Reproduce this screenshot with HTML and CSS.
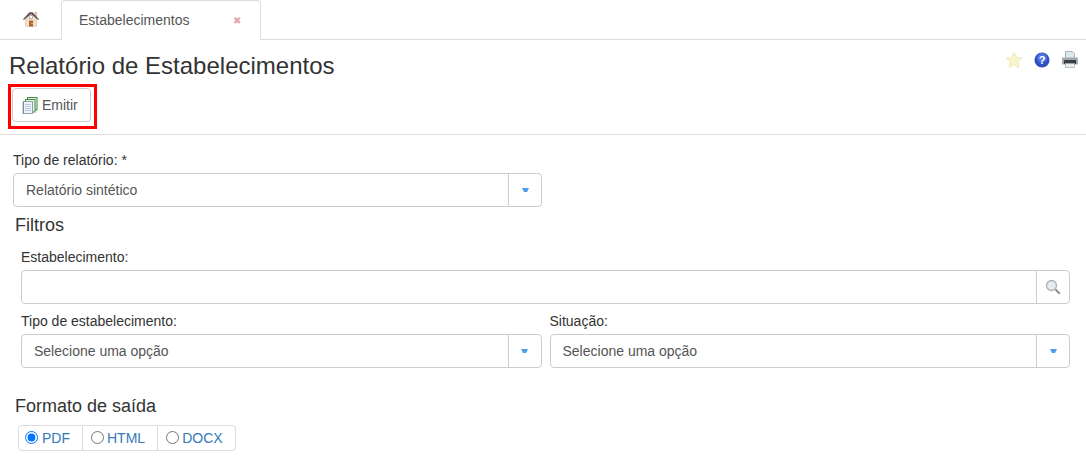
FILE: index.html
```html
<!DOCTYPE html>
<html lang="pt-BR">

<head>
    <meta charset="UTF-8">
    <title>Relatório de Estabelecimentos</title>
    <link rel="stylesheet" href="styles.css">
</head>

<body>
    <div class="tabs">
        <a class="tab-home" href="#" aria-label="Início">
            <svg width="18" height="18" viewBox="0 0 18 18">
                <rect x="12.500" y="2" width="2.500" height="5" fill="#d9c3ac"/>
                <path d="M3.500 8.500 L9 3.500 L14.500 8.500 V16.500 H3.500 Z" fill="#f3dfc9" stroke="#d8bfa6" stroke-width="0.6"/>
                <path d="M0.800 9.500 L7.500 2.300 H10.500 L17.200 9.500 L15.800 9.800 L9 4 L2.200 9.800 Z" fill="#5f5058"/>
                <rect x="7.500" y="5.500" width="3" height="3" fill="#fff" stroke="#9a8f8c" stroke-width="0.6"/>
                <rect x="7" y="10.500" width="4" height="6" fill="#b5652a"/>
                <rect x="9.500" y="13" width="1" height="1" fill="#f6e2a8"/>
            </svg>
        </a>
        <div class="tab-active">
            <span>Estabelecimentos</span>
            <span class="tab-close">✖</span>
        </div>
    </div>

    <div class="title-row">
        <h1>Relatório de Estabelecimentos</h1>
        <div class="title-icons">
            <svg width="18" height="18" viewBox="0 0 18 18">
                <path d="M9 1 L11.300 6.400 L17 7 L12.700 10.800 L14 16.600 L9 13.600 L4 16.600 L5.300 10.800 L1 7 L6.700 6.400 Z" fill="#f8f4cc" stroke="#ece6b8" stroke-width="0.8"/>
            </svg>
            <svg width="16" height="16" viewBox="0 0 16 16">
                <circle cx="8" cy="8" r="7.500" fill="#2f4fc0"/>
                <circle cx="8" cy="6" r="5" fill="#4f74dc"/>
                <text x="8" y="12" class="help-mark">?</text>
            </svg>
            <svg width="18" height="18" viewBox="0 0 18 18">
                <path d="M4.500 0.500 H11.500 L13.500 2.500 V8 H4.500 Z" fill="#dce8ec" stroke="#a3b6bc"/>
                <rect x="1" y="6.500" width="16" height="7" rx="1" fill="#a2a9ad"/>
                <rect x="3" y="9" width="12" height="4" fill="#3a4043"/>
                <rect x="15" y="7.500" width="1" height="1" fill="#7fd17f"/>
                <rect x="4.500" y="12.500" width="9" height="4" fill="#e8eef0" stroke="#9fb0b5" stroke-width="0.7"/>
            </svg>
        </div>
    </div>

    <div class="toolbar">
        <button class="btn" type="button">
            <svg width="16" height="17" viewBox="0 0 16 17">
                <rect x="5.500" y="0.500" width="9.500" height="12.500" fill="#eaf3e6" stroke="#3f8a3f"/>
                <rect x="3.500" y="2.500" width="9.500" height="12.500" fill="#eaf3e6" stroke="#3f8a3f"/>
                <rect x="1.500" y="4.500" width="9" height="12" fill="#eef3fa" stroke="#8fa0ad"/>
                <path d="M1 5.500 V16.500" stroke="#555" stroke-dasharray="1 1"/>
                <path d="M3 7.500 H9 M3 9.500 H9 M3 11.500 H9 M3 13.500 H9" stroke="#b4c8e6"/>
            </svg>
            Emitir
        </button>
        <div class="highlight"></div>
    </div>

    <form class="form">
        <div class="field field-tipo">
            <label>Tipo de relatório: *</label>
            <div class="select">
                <span class="select-text">Relatório sintético</span>
                <span class="select-btn"><i class="caret"></i></span>
            </div>
        </div>

        <h2>Filtros</h2>
        <div class="filters">
            <div class="field">
                <label>Estabelecimento:</label>
                <div class="select">
                    <span class="select-text"></span>
                    <span class="select-btn">
                        <svg width="16" height="16" viewBox="0 0 16 16">
                            <circle cx="6.500" cy="6.500" r="5" fill="#e6edf2" stroke="#aab2b8" stroke-width="1.300"/>
                            <path d="M10.500 10.500 L14.800 14.800" stroke="#8d9499" stroke-width="2.200"/>
                        </svg>
                    </span>
                </div>
            </div>
            <div class="filter-cols">
                <div class="field">
                    <label>Tipo de estabelecimento:</label>
                    <div class="select">
                        <span class="select-text">Selecione uma opção</span>
                        <span class="select-btn"><i class="caret"></i></span>
                    </div>
                </div>
                <div class="field">
                    <label>Situação:</label>
                    <div class="select">
                        <span class="select-text">Selecione uma opção</span>
                        <span class="select-btn"><i class="caret"></i></span>
                    </div>
                </div>
            </div>
        </div>

        <h2 class="output-title">Formato de saída</h2>
        <div class="radios">
            <label class="radio"><input type="radio" name="formato" checked>PDF</label>
            <label class="radio"><input type="radio" name="formato">HTML</label>
            <label class="radio"><input type="radio" name="formato">DOCX</label>
        </div>
    </form>
</body>

</html>
```

FILE: styles.css
```css
:root {
    --text: #333333;
    --border: #cccccc;
    --line: #dddddd;
    --link: #337ab7;
}

html, body {
    height: 465px;
    overflow: hidden;
}

body {
    margin: 0;
    font-family: "Liberation Sans", Arial, sans-serif;
    font-size: 14px;
    color: var(--text);
    background: white;
}

.tabs {
    display: flex;
    height: 40px;
    box-sizing: border-box;
    border-bottom: 1px solid var(--line);
}

.tab-home {
    width: 61px;
    padding-top: 10px;
    padding-left: 22px;
    box-sizing: border-box;
}

.tab-active {
    display: flex;
    justify-content: space-between;
    width: 200px;
    height: 40px;
    box-sizing: border-box;
    padding: 11px 19px 0 17px;
    line-height: 16px;
    color: #555555;
    background: white;
    border: 1px solid var(--line);
    border-bottom: none;
    border-radius: 4px 4px 0 0;
}

.tab-close {
    font-size: 10px;
    color: #e3a5a5;
    line-height: 18px;
}

.title-row {
    display: flex;
    justify-content: space-between;
    height: 44px;
    padding: 11px 7px 0 9px;
    box-sizing: border-box;
}

h1 {
    margin: 0;
    font-size: 24px;
    font-weight: 400;
    line-height: 30px;
}

.title-icons {
    display: flex;
    align-items: center;
    gap: 11px;
    height: 18px;
}

.help-mark {
    font-size: 11px;
    font-weight: 700;
    fill: white;
    text-anchor: middle;
}

.toolbar {
    position: relative;
    height: 51px;
    padding: 4px 0 0 12px;
    box-sizing: border-box;
    border-bottom: 1px solid var(--line);
}

.btn {
    display: flex;
    align-items: center;
    gap: 4px;
    width: 79px;
    height: 34px;
    padding: 0 0 0 9px;
    font-family: inherit;
    font-size: 14px;
    color: #555555;
    background: white;
    border: 1px solid var(--border);
    border-radius: 4px;
}

.highlight {
    position: absolute;
    top: 0;
    left: 8px;
    width: 89px;
    height: 45px;
    box-sizing: border-box;
    border: 3px solid #ff0000;
}

.form {
    padding: 17px 16px 0 13px;
}

label {
    display: block;
    line-height: 17px;
    margin-bottom: 4px;
}

.field-tipo {
    width: 529px;
}

.select {
    display: flex;
    height: 34px;
    box-sizing: border-box;
    border: 1px solid var(--border);
    border-radius: 4px;
}

.select-text {
    flex: 1;
    padding-left: 12px;
    line-height: 32px;
    color: #555555;
}

.select-btn {
    display: flex;
    align-items: center;
    justify-content: center;
    width: 32px;
    border-left: 1px solid var(--border);
}

.caret {
    width: 3px;
    height: 0;
    border: 2px solid transparent;
    border-top: 4px solid #4a9fe8;
    border-bottom: none;
}

h2 {
    margin: 8px 0 0 2px;
    font-size: 18px;
    font-weight: 400;
    line-height: 20px;
}

.filters {
    display: flex;
    flex-direction: column;
    gap: 9px;
    padding: 14px 0 0 8px;
}

.filter-cols {
    display: grid;
    grid-template-columns: 1fr 1fr;
    gap: 8px;
}

.output-title {
    margin-top: 28px;
}

.radios {
    display: inline-flex;
    height: 26px;
    margin: 9px 0 0 5px;
    box-sizing: border-box;
    border: 1px solid var(--line);
    border-radius: 4px;
}

.radio {
    display: flex;
    align-items: center;
    margin: 0;
    padding: 0 12px 0 8px;
    color: var(--link);
    border-left: 1px solid var(--line);
}

.radio:first-child {
    padding-left: 6px;
    border-left: none;
}

.radio input {
    width: 13px;
    height: 13px;
    margin: 0 4px 2px 0;
}

.radio + .radio input {
    margin-right: 3px;
}
```
